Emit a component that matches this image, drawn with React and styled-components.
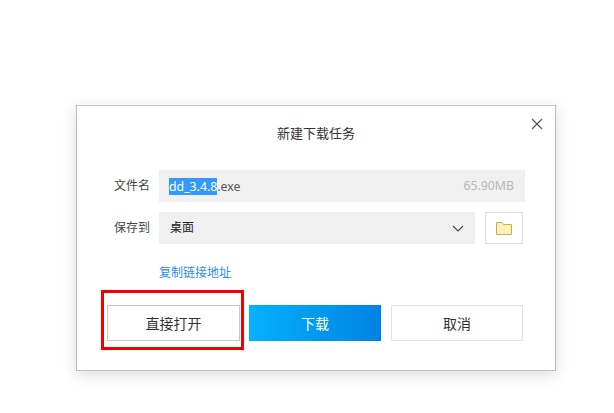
import React from "react";
import styled, { createGlobalStyle } from "styled-components";

const Global = createGlobalStyle`
  html, body { margin: 0; padding: 0; background: #fff; }
  body { font-family: "Noto Sans CJK SC", "Liberation Sans", sans-serif; }
`;

const Page = styled.div`
  width: 614px;
  height: 413px;
  box-sizing: border-box;
  padding: 105px 0 0 76px;
  overflow: hidden;
  background: #fff;
`;

const Dialog = styled.div`
  position: relative;
  width: 480px;
  height: 266px;
  box-sizing: border-box;
  background: #fff;
  border: 1px solid #bdbdbd;
  border-top-color: #c4c4c4;
  box-shadow: 0 4px 14px rgba(0, 0, 0, 0.14);
  padding: 0 30px;
  display: flex;
  flex-direction: column;
`;

const Title = styled.div`
  height: 64px;
  line-height: 53px;
  text-align: center;
  font-size: 13px;
  color: #333;
`;

const Close = styled.button`
  position: absolute;
  top: 11px;
  right: 11px;
  width: 14px;
  height: 14px;
  padding: 0;
  border: 0;
  background: none;
  display: flex;
`;

const Row = styled.div`
  display: flex;
  align-items: center;
  height: 32px;
  margin-bottom: 10px;
`;

const Label = styled.div`
  width: 52px;
  font-size: 12px;
  color: #444;
  padding: 0 0 3px 7px;
  box-sizing: border-box;
`;

const Field = styled.div`
  flex: ${p => (p.$grow ? 1 : "none")};
  width: ${p => (p.$grow ? "auto" : "316px")};
  height: 32px;
  box-sizing: border-box;
  background: #f0f0f0;
  display: flex;
  align-items: center;
  justify-content: space-between;
  padding: 0 11px 0 10px;
  font-size: 12px;
  color: #222;
`;

const SaveTarget = styled.span`
  padding: 0 0 3px 1px;
`;

const FileName = styled.div`
  font-family: "Noto Sans", "Liberation Sans", sans-serif;
  font-size: 12.3px;
  color: #555;
  line-height: 17px;
`;

const Selected = styled.span`
  background: #3399ff;
  color: #fff;
  display: inline-block;
  height: 17px;
`;

const Size = styled.div`
  font-family: "Noto Sans", "Liberation Sans", sans-serif;
  font-size: 12.3px;
  color: #b9b9b9;
  margin-top: -1px;
`;

const Chevron = styled.svg`
  width: 12px;
  height: 7px;
`;

const FolderButton = styled.button`
  width: 38px;
  height: 32px;
  margin-left: 10px;
  padding: 0;
  box-sizing: border-box;
  border: 1px solid #e0e0e0;
  background: #fff;
  display: flex;
  align-items: center;
  justify-content: center;
`;

const LinkRow = styled.div`
  margin-top: 10px;
  padding-left: 52px;
  height: 16px;
  line-height: 16px;
  font-size: 12px;
  color: #2a8cec;
`;

const Actions = styled.div`
  display: flex;
  margin-top: 25px;
`;

const Button = styled.button`
  position: relative;
  flex: none;
  width: ${p => p.$w}px;
  height: 36px;
  margin-right: ${p => p.$gap || 0}px;
  box-sizing: border-box;
  font-family: inherit;
  font-size: 14px;
  line-height: 32px;
  color: ${p => (p.$primary ? "#fff" : "#333")};
  border: ${p => (p.$primary ? "0" : `1px solid ${p.$line || "#e2e2e2"}`)};
  background: ${p => (p.$primary ? "linear-gradient(90deg, #05b1fd, #0082e4)" : "#fff")};
  padding: 0 0 1px;
`;

const Highlight = styled.div`
  position: absolute;
  left: -7px;
  top: -16px;
  width: 143px;
  height: 60px;
  box-sizing: border-box;
  border: 3px solid #f20000;
  pointer-events: none;
`;

export default function App() {
  return (
    <Page>
      <Global />
      <Dialog>
        <Title>新建下载任务</Title>
        <Close aria-label="关闭">
          <svg width="14" height="14" viewBox="0 0 14 14" fill="none" stroke="#555" strokeWidth="1.2">
            <path d="M2 2l10 10M12 2L2 12" />
          </svg>
        </Close>
        <Row>
          <Label>文件名</Label>
          <Field $grow>
            <FileName><Selected>dd_3.4.8</Selected>.exe</FileName>
            <Size>65.90MB</Size>
          </Field>
        </Row>
        <Row>
          <Label>保存到</Label>
          <Field>
            <SaveTarget>桌面</SaveTarget>
            <Chevron viewBox="0 0 12 7" fill="none" stroke="#444" strokeWidth="1.1">
              <path d="M1 1l5 5 5-5" />
            </Chevron>
          </Field>
          <FolderButton aria-label="选择文件夹">
            <svg width="16" height="13" viewBox="0 0 16 13">
              <path d="M.5.5h5.5l1.5 2h8v10H.5z" fill="#fef2b6" stroke="#c9a95c" />
            </svg>
          </FolderButton>
        </Row>
        <LinkRow>复制链接地址</LinkRow>
        <Actions>
          <Button $w={133} $gap={9} $line="#c8c8c8">
            直接打开
            <Highlight />
          </Button>
          <Button $w={132} $gap={10} $primary>下载</Button>
          <Button $w={132}>取消</Button>
        </Actions>
      </Dialog>
    </Page>
  );
}
